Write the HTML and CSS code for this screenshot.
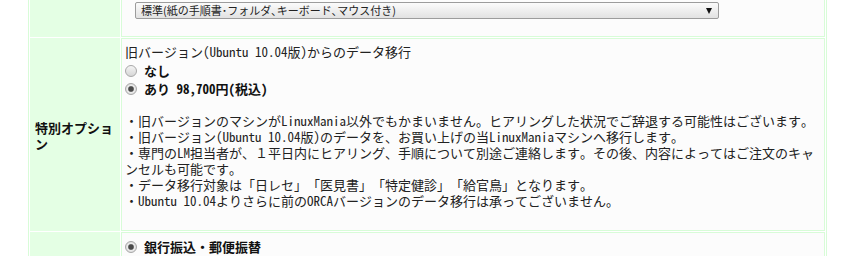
FILE: index.html
```html
<!DOCTYPE html>
<html lang="ja">
<head>
    <meta charset="UTF-8">
    <meta name="viewport" content="width=device-width, initial-scale=1.0">
    <title>ご注文内容</title>
    <link rel="stylesheet" href="styles.css">
</head>
<body>
    <div class="page">
        <table class="order_form">
            <tr>
                <th></th>
                <td>
                    <div class="select_wrap">
                        <select class="kit_select" name="kit">
                            <option>標準(紙の手順書･フォルダ､キーボード､マウス付き)</option>
                        </select>
                    </div>
                </td>
            </tr>
            <tr>
                <th>特別オプション</th>
                <td>
                    <p class="question">旧バージョン(Ubuntu 10.04版)からのデータ移行</p>
                    <div class="radios">
                        <label class="radio"><input type="radio" name="migrate" value="0">なし</label>
                        <label class="radio"><input type="radio" name="migrate" value="1" checked>あり 98,700円(税込)</label>
                    </div>
                    <ul class="notes">
                        <li>・旧バージョンのマシンがLinuxMania以外でもかまいません。ヒアリングした状況でご辞退する可能性はございます。</li>
                        <li>・旧バージョン(Ubuntu 10.04版)のデータを、お買い上げの当LinuxManiaマシンへ移行します。</li>
                        <li>・専門のLM担当者が、１平日内にヒアリング、手順について別途ご連絡します。その後、内容によってはご注文のキャンセルも可能です。</li>
                        <li>・データ移行対象は「日レセ」「医見書」「特定健診」「給官鳥」となります。</li>
                        <li>・Ubuntu 10.04よりさらに前のORCAバージョンのデータ移行は承ってございません。</li>
                    </ul>
                </td>
            </tr>
            <tr>
                <th></th>
                <td>
                    <label class="radio"><input type="radio" name="payment" value="bank" checked>銀行振込・郵便振替</label>
                </td>
            </tr>
        </table>
    </div>
</body>
</html>
```

FILE: styles.css
```css
html {
    overflow: hidden;
}

body {
    font-family: "Noto Sans Mono CJK JP", "Noto Sans CJK JP", "DejaVu Sans Mono", monospace;
    font-size: 13px;
    line-height: 16px;
    color: #222;
    margin: 0;
    padding: 0;
    background-color: #fff;
    text-spacing-trim: space-all;
}

.page {
    padding-left: 28px;
}

.order_form {
    box-sizing: border-box;
    width: 799px;
    margin-top: -6px;
    border: 1px solid #d8fcd8;
    border-spacing: 1px;
}

.order_form th {
    box-sizing: border-box;
    width: 90px;
    padding: 2px 4px 0 4px;
    background-color: #e4ffe4;
    border: 1px solid #e4ffe4;
    text-align: left;
    vertical-align: middle;
    font-weight: bold;
    color: #111;
}

.order_form td {
    padding: 5px 5px 5px 3px;
    background-color: #fcfcfc;
    border: 1px solid #d8fcd8;
    vertical-align: top;
}

.select_wrap {
    position: relative;
    display: inline-block;
    margin-left: 10px;
    margin-bottom: 12px;
}

.select_wrap::after {
    content: "";
    position: absolute;
    right: 7px;
    top: 6px;
    border-top: 6px solid #111;
    border-left: 3px solid transparent;
    border-right: 3px solid transparent;
    pointer-events: none;
}

.kit_select {
    appearance: none;
    -webkit-appearance: none;
    display: block;
    width: 584px;
    height: 17px;
    margin: 0;
    padding: 0 0 0 5px;
    font-family: "Noto Sans CJK JP", sans-serif;
    font-size: 11px;
    line-height: 15px;
    color: #222;
    background: linear-gradient(#fbfbfb, #e2e2e2);
    border: 1px solid #9c9c9c;
    border-radius: 2px;
}

.question {
    margin: 0;
}

.radios {
    margin-top: 2px;
}

.radio {
    display: flex;
    align-items: center;
    height: 18px;
    font-weight: bold;
    color: #111;
}

.radio input {
    appearance: none;
    -webkit-appearance: none;
    box-sizing: border-box;
    width: 12px;
    height: 12px;
    margin: 0 7px 0 0;
    border: 1px solid #a8a8a8;
    border-radius: 50%;
    background: linear-gradient(#f4f4f4, #d6d6d6);
}

.radio input:checked {
    background: radial-gradient(circle, #4a4a4a 0, #4a4a4a 2.2px, #8a8a8a 2.8px, #ececec 3.4px, #d6d6d6 6px);
}

.notes {
    list-style: none;
    margin: 15px 0 16px 0;
    padding: 0;
}
```
